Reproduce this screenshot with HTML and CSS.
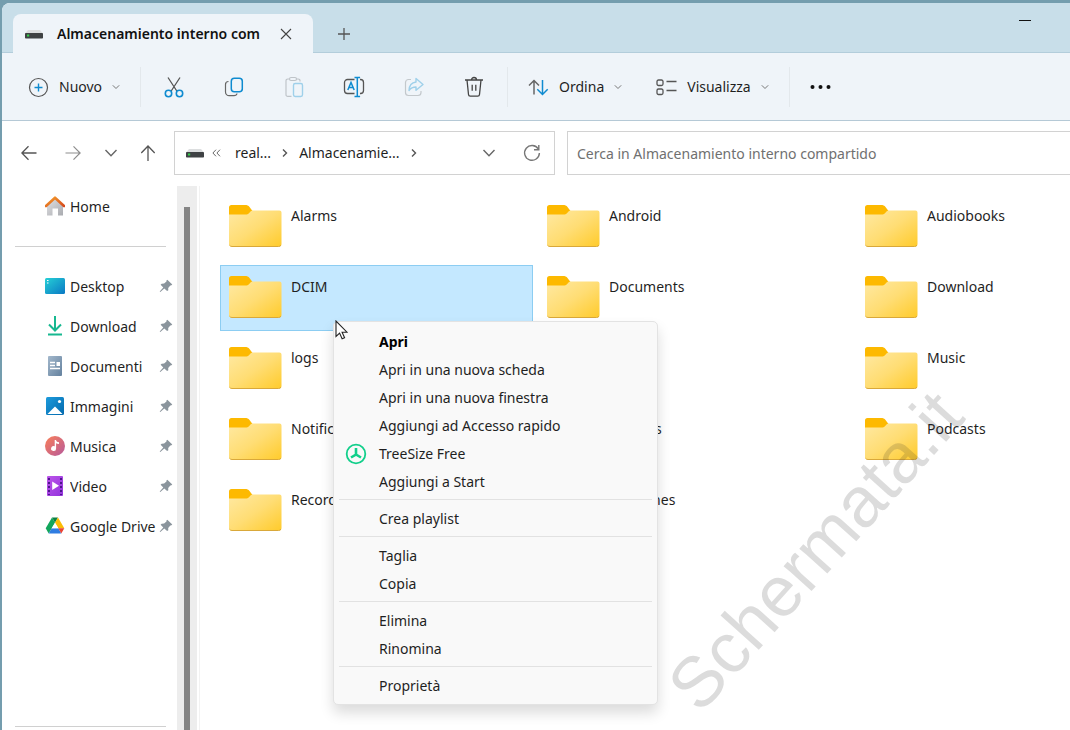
FILE: index.html
```html
<!DOCTYPE html>
<html lang="it">
<head>
  <meta charset="UTF-8" />
  <meta name="viewport" content="width=device-width, initial-scale=1.0"/>
  <title>Almacenamiento interno compartido</title>
  <link rel="stylesheet" href="styles.css">
</head>
<body>

  <!-- shared icons -->
  <svg class="sprite" width="0" height="0" aria-hidden="true">
    <defs>
      <linearGradient id="gFolder" x1="0" y1="0" x2="1" y2="1">
        <stop offset="0" stop-color="#ffe9a2"/>
        <stop offset="0.5" stop-color="#ffdd74"/>
        <stop offset="1" stop-color="#ffcb2b"/>
      </linearGradient>
      <linearGradient id="gDesk" x1="0" y1="0" x2="1" y2="1">
        <stop offset="0" stop-color="#26d0d6"/>
        <stop offset="1" stop-color="#0a78c4"/>
      </linearGradient>
      <linearGradient id="gRoof" x1="0" y1="0" x2="1" y2="1">
        <stop offset="0" stop-color="#f6a02c"/>
        <stop offset="1" stop-color="#d5491c"/>
      </linearGradient>
      <linearGradient id="gWall" x1="0" y1="0" x2="1" y2="1">
        <stop offset="0" stop-color="#e2e2e4"/>
        <stop offset="1" stop-color="#a9abb0"/>
      </linearGradient>
      <linearGradient id="gDoc" x1="0" y1="0" x2="1" y2="1">
        <stop offset="0" stop-color="#a3b8cc"/>
        <stop offset="1" stop-color="#64819e"/>
      </linearGradient>
      <linearGradient id="gPic" x1="0" y1="0" x2="1" y2="1">
        <stop offset="0" stop-color="#1d9bdc"/>
        <stop offset="1" stop-color="#0369ad"/>
      </linearGradient>
      <linearGradient id="gMusic" x1="0" y1="0" x2="1" y2="1">
        <stop offset="0" stop-color="#fa7f58"/>
        <stop offset="1" stop-color="#b65a9c"/>
      </linearGradient>
      <linearGradient id="gVideo" x1="0" y1="0" x2="1" y2="1">
        <stop offset="0" stop-color="#bd55ea"/>
        <stop offset="1" stop-color="#9233dc"/>
      </linearGradient>
    </defs>
    <symbol id="folder" viewBox="0 0 54 42">
      <path d="M1 2.5A2.5 2.5 0 0 1 3.500 0H17c2 0 3.500.6 4.500 2l3 4L19 11H1z" fill="#fdb900"/>
      <path d="M1 9.500h16.500c1.600 0 2.600-.4 3.700-1.600l1.300-1.300c.8-.8 1.500-1.100 2.700-1.100H51.500A2 2 0 0 1 53.500 7.500V39a2.500 2.500 0 0 1-2.500 2.500H3.500A2.500 2.500 0 0 1 1 39z" fill="url(#gFolder)"/>
      <path d="M1.500 40.200q.8 1.300 2.500 1.300h46.500q1.700 0 2.500-1.300" fill="none" stroke="#d9a83a" stroke-width="1"/>
    </symbol>
    <symbol id="pin" viewBox="0 0 14 14">
      <path d="M8.300.8 13.300 5.600 12 6.600 11.300 6.500 9.200 8.900 9.300 11.200 8.100 12.100 5.300 9.400 1.300 13.100.7 12.500 4.300 8.400 1.600 5.700 2.700 4.700 5.100 4.600 7.500 2.600 7.300 1.700z" fill="#8a949c"/>
    </symbol>
    <symbol id="chev" viewBox="0 0 8 8">
      <path d="M.8 2.300 4 5.500 7.200 2.300" fill="none" stroke="#777" stroke-width="1"/>
    </symbol>
    <symbol id="chevBig" viewBox="0 0 14 14">
      <path d="M1.500 4 7 9.700 12.500 4" fill="none" stroke="#666" stroke-width="1.400"/>
    </symbol>
    <symbol id="chevRight" viewBox="0 0 8 10">
      <path d="M2 1.500 5.500 5 2 8.500" fill="none" stroke="#555" stroke-width="1.400"/>
    </symbol>
    <symbol id="drive" viewBox="0 0 18 10">
      <path d="M3 1h12l3 3.500H0z" fill="#dcdedf"/>
      <rect y="4" width="18" height="5.500" rx=".8" fill="#3f4244"/>
      <rect x="2" y="5.500" width="2.200" height="2" fill="#35d04a"/>
    </symbol>
  </svg>

  <div class="window">
    <header class="titlebar">
      <div class="tab">
        <svg class="drive" viewBox="0 0 18 10"><use href="#drive"/></svg>
        <span class="tab-title">Almacenamiento interno com</span>
        <button class="tab-close" aria-label="Chiudi scheda">
          <svg width="12" height="12" viewBox="0 0 12 12"><path d="M1 1l10 10M11 1 1 11" stroke="#444" stroke-width="1.100"/></svg>
        </button>
      </div>
      <button class="tab-new" aria-label="Nuova scheda">
        <svg width="14" height="14" viewBox="0 0 14 14"><path d="M7 1v12M1 7h12" stroke="#555" stroke-width="1.300"/></svg>
      </button>
      <button class="minimize" aria-label="Riduci a icona">
        <svg width="12" height="2" viewBox="0 0 12 2"><path d="M0 .5h12" stroke="#111" stroke-width="1"/></svg>
      </button>
    </header>

    <div class="toolbar">
      <button class="tool-menu">
        <svg width="21" height="21" viewBox="0 0 21 21" fill="none"><circle cx="10.500" cy="10.500" r="9" stroke="#555" stroke-width="1.200"/><path d="M10.500 6.500v8M6.500 10.500h8" stroke="#0f8bd0" stroke-width="1.400"/></svg>
        <span>Nuovo</span>
        <svg width="8" height="8"><use href="#chev"/></svg>
      </button>
      <span class="tool-sep"></span>
      <button class="tool" aria-label="Taglia">
        <svg width="22" height="22" viewBox="0 0 22 22" fill="none" stroke-width="1.300"><path d="M5 1.500 13.800 15M17 1.500 8.200 15" stroke="#555"/><circle cx="5.500" cy="17.500" r="3.200" stroke="#0f8bd0" stroke-width="1.600"/><circle cx="16.500" cy="17.500" r="3.200" stroke="#0f8bd0" stroke-width="1.600"/></svg>
      </button>
      <button class="tool" aria-label="Copia">
        <svg width="22" height="22" viewBox="0 0 22 22" fill="none"><path d="M5.500 5.500C3.300 5.500 2.500 6.800 2.500 8.500V16a3.700 3.700 0 0 0 3.700 3.700H11c1.500 0 2.700-.7 3-2.200" stroke="#666" stroke-width="1.200"/><rect x="8.300" y="2.300" width="11" height="13.400" rx="3" stroke="#0f8bd0" stroke-width="1.500"/></svg>
      </button>
      <button class="tool" aria-label="Incolla">
        <svg width="22" height="22" viewBox="0 0 22 22" fill="none" stroke="#bfc4c9" stroke-width="1.200"><path d="M6.500 3H4.700A1.700 1.700 0 0 0 3 4.700v14A1.700 1.700 0 0 0 4.700 20.400H8.500M13.500 3h1.800A1.700 1.700 0 0 1 17 4.700V5.500"/><rect x="6.500" y="1.500" width="7" height="3" rx="1.500"/><rect x="10.500" y="7.500" width="9" height="13" rx="1.700" stroke="#9fd0ea" stroke-width="1.400"/></svg>
      </button>
      <button class="tool" aria-label="Rinomina">
        <svg width="22" height="22" viewBox="0 0 22 22" fill="none"><path d="M11.500 3.500H4.500a3 3 0 0 0-3 3v8a3 3 0 0 0 3 3h7M17 3.500h.5a3 3 0 0 1 3 3v8a3 3 0 0 1-3 3H17" stroke="#555" stroke-width="1.300"/><path d="M4.800 14 8 6.500 11.200 14M5.900 11.500h4.200M14.300 2v18M11.500 1.500h5.600M11.500 20.500h5.600" stroke="#0f8bd0" stroke-width="1.500"/></svg>
      </button>
      <button class="tool" aria-label="Condividi">
        <svg width="22" height="22" viewBox="0 0 22 22" fill="none"><path d="M8 3.500H5.500a3 3 0 0 0-3 3v10a3 3 0 0 0 3 3h9.500a3 3 0 0 0 3-3V15" stroke="#c3c8cc" stroke-width="1.200"/><path d="M13 2.500 20 8.500 13 14.300V11c-3.500 0-5.500 1.300-7 3.500.2-4.800 2.500-8 7-8.500z" stroke="#9fd0ea" stroke-width="1.400" stroke-linejoin="round"/></svg>
      </button>
      <button class="tool" aria-label="Elimina">
        <svg width="22" height="22" viewBox="0 0 22 22" fill="none" stroke="#444" stroke-width="1.300"><path d="M2 4h18M8.500 4a2.500 2.500 0 0 1 5 0M4 4l1.500 14.500a1.800 1.800 0 0 0 1.800 1.700h7.400a1.800 1.800 0 0 0 1.800-1.700L18 4M9.200 8.800v6M12.800 8.800v6"/></svg>
      </button>
      <span class="tool-sep"></span>
      <button class="tool-menu">
        <svg width="21" height="21" viewBox="0 0 21 21" fill="none" stroke-width="1.500"><path d="M6 17.500V3.500M1 8.500l5-5 5 5" stroke="#666"/><path d="M14.500 3v14.500M9.300 12.300l5.200 5.200 5.200-5.200" stroke="#0f8bd0"/></svg>
        <span>Ordina</span>
        <svg width="8" height="8"><use href="#chev"/></svg>
      </button>
      <button class="tool-menu">
        <svg width="21" height="21" viewBox="0 0 21 21" fill="none" stroke="#555" stroke-width="1.300"><rect x="1" y="3" width="6" height="5.500" rx="1.500"/><rect x="1" y="12" width="6" height="5.500" rx="1.500"/><path d="M10.500 4.500h10M10.500 13.500h10"/></svg>
        <span>Visualizza</span>
        <svg width="8" height="8"><use href="#chev"/></svg>
      </button>
      <span class="tool-sep"></span>
      <button class="tool-menu" aria-label="Altro">
        <svg width="22" height="6" viewBox="0 0 22 6" fill="#111"><circle cx="2.500" cy="3" r="2"/><circle cx="10.500" cy="3" r="2"/><circle cx="18.500" cy="3" r="2"/></svg>
      </button>
    </div>

    <div class="navbar">
      <button class="nav-btn" aria-label="Indietro">
        <svg width="16" height="16" viewBox="0 0 16 16" fill="none" stroke="#555" stroke-width="1.300"><path d="M15.500 8H1M7.500 1.300.9 8l6.600 6.700"/></svg>
      </button>
      <button class="nav-btn" aria-label="Avanti">
        <svg width="16" height="16" viewBox="0 0 16 16" fill="none" stroke="#8d8d8d" stroke-width="1.200"><path d="M.5 8H15M8.500 1.300 15.100 8l-6.600 6.700"/></svg>
      </button>
      <button class="nav-btn narrow" aria-label="Percorsi recenti">
        <svg width="14" height="14"><use href="#chevBig"/></svg>
      </button>
      <button class="nav-btn" aria-label="Su">
        <svg width="16" height="16" viewBox="0 0 16 16" fill="none" stroke="#555" stroke-width="1.300"><path d="M7 16V1M.3 8 7 1l6.700 7"/></svg>
      </button>
      <div class="address">
        <svg class="drive" viewBox="0 0 18 10"><use href="#drive"/></svg>
        <svg class="more" width="9" height="8" viewBox="0 0 9 8"><path d="M4 .7.900 4 4 7.300M8 .7 4.900 4 8 7.300" fill="none" stroke="#666"/></svg>
        <a href="#">real...</a>
        <svg width="8" height="10"><use href="#chevRight"/></svg>
        <a href="#">Almacenamie...</a>
        <svg width="8" height="10"><use href="#chevRight"/></svg>
        <button class="history" aria-label="Percorsi precedenti"><svg width="14" height="14"><use href="#chevBig"/></svg></button>
        <button class="refresh" aria-label="Aggiorna">
          <svg width="18" height="18" viewBox="0 0 18 18" fill="none" stroke="#777" stroke-width="1.400"><path d="M15.300 5A7.400 7.400 0 1 0 16.400 9M15.800 1v4.800H11"/></svg>
        </button>
      </div>
      <input class="search" type="search" aria-label="Cerca" placeholder="Cerca in Almacenamiento interno compartido">
    </div>

    <div class="content">
      <nav class="sidebar">
        <a href="#" class="side-item">
          <svg width="20" height="20" viewBox="0 0 20 20"><path d="M2 9 10 2l8 7v10.500h-5V12.500H7.500v7H2z" fill="url(#gWall)"/><path d="M1 10 10 1.700l9 8.300" fill="none" stroke="url(#gRoof)" stroke-width="2.600" stroke-linejoin="round" stroke-linecap="round"/></svg>
          <span>Home</span>
        </a>
        <hr>
        <a href="#" class="side-item">
          <svg width="20" height="20" viewBox="0 0 20 20"><rect y="2" width="20" height="16" rx="1.500" fill="url(#gDesk)"/><path d="M2 4.500h1.500M2 7h1.500" stroke="#fff" stroke-width="1.200"/></svg>
          <span>Desktop</span>
          <svg class="pin"><use href="#pin"/></svg>
        </a>
        <a href="#" class="side-item">
          <svg width="20" height="20" viewBox="0 0 20 20" fill="none" stroke="#17b890" stroke-width="2"><path d="M10 0v14M4 8.500l6 6 6-6M3 18.500h14"/></svg>
          <span>Download</span>
          <svg class="pin"><use href="#pin"/></svg>
        </a>
        <a href="#" class="side-item">
          <svg width="20" height="20" viewBox="0 0 20 20"><rect x="3" width="14" height="20" rx="1" fill="url(#gDoc)"/><path d="M5 6.500h5M5 9.500h5M5 12.500h10" stroke="#fff" stroke-width="1.300"/><rect x="11.500" y="6" width="3.500" height="4" fill="#fff"/></svg>
          <span>Documenti</span>
          <svg class="pin"><use href="#pin"/></svg>
        </a>
        <a href="#" class="side-item">
          <svg width="20" height="20" viewBox="0 0 20 20"><rect x="1" y="1" width="18" height="18" rx="1.500" fill="url(#gPic)"/><path d="M2.500 18 10 10.500 17.500 18z" fill="#fff"/><circle cx="14.500" cy="5.500" r="1.600" fill="#fff"/></svg>
          <span>Immagini</span>
          <svg class="pin"><use href="#pin"/></svg>
        </a>
        <a href="#" class="side-item">
          <svg width="20" height="20" viewBox="0 0 20 20"><circle cx="10" cy="10" r="10" fill="url(#gMusic)"/><path d="M9.700 4h1.300c.3 1.700 1.500 2 3 2.200v1.800c-1.200 0-2.200-.3-2.900-.8V12.500a2.500 2.500 0 1 1-1.400-2.200z" fill="#fff"/></svg>
          <span>Musica</span>
          <svg class="pin"><use href="#pin"/></svg>
        </a>
        <a href="#" class="side-item">
          <svg width="20" height="20" viewBox="0 0 20 20"><rect x="2" width="16" height="20" rx="1" fill="url(#gVideo)"/><path d="M4 2v17M16 2v17" stroke="#4e168c" stroke-width="2" stroke-dasharray="2 2"/><path d="M7.200 5.500v8.500l6.800-4.200z" fill="#fff"/></svg>
          <span>Video</span>
          <svg class="pin"><use href="#pin"/></svg>
        </a>
        <a href="#" class="side-item">
          <svg width="20" height="20" viewBox="0 0 20 20"><path d="M7 1.500 10 6.800 3.700 17.500.7 12.300z" fill="#12a65c"/><path d="M7 1.500h6l-3 5.300z" fill="#0c8043"/><path d="M13 1.500l6.300 10.800h-6L10 6.800z" fill="#fbbc05"/><path d="M6.700 12.300h6.600L16.300 17.500H3.700z" fill="#2f7de1"/><path d="M13.300 12.300h6L16.300 17.500z" fill="#ea4335"/><path d="M10 6.800l3.300 5.500H6.700z" fill="#fff"/></svg>
          <span>Google Drive</span>
          <svg class="pin"><use href="#pin"/></svg>
        </a>
        <hr class="last">
      </nav>
      <div class="scrollbar"><div class="thumb"></div></div>

      <main class="files">
        <a href="#" class="file"><svg class="folder"><use href="#folder"/></svg><span>Alarms</span></a>
        <a href="#" class="file"><svg class="folder"><use href="#folder"/></svg><span>Android</span></a>
        <a href="#" class="file"><svg class="folder"><use href="#folder"/></svg><span>Audiobooks</span></a>
        <a href="#" class="file selected"><svg class="folder"><use href="#folder"/></svg><span>DCIM</span></a>
        <a href="#" class="file"><svg class="folder"><use href="#folder"/></svg><span>Documents</span></a>
        <a href="#" class="file"><svg class="folder"><use href="#folder"/></svg><span>Download</span></a>
        <a href="#" class="file"><svg class="folder"><use href="#folder"/></svg><span>logs</span></a>
        <a href="#" class="file"><svg class="folder"><use href="#folder"/></svg><span>Movies</span></a>
        <a href="#" class="file"><svg class="folder"><use href="#folder"/></svg><span>Music</span></a>
        <a href="#" class="file"><svg class="folder"><use href="#folder"/></svg><span>Notifications</span></a>
        <a href="#" class="file"><svg class="folder"><use href="#folder"/></svg><span>Pictures</span></a>
        <a href="#" class="file"><svg class="folder"><use href="#folder"/></svg><span>Podcasts</span></a>
        <a href="#" class="file"><svg class="folder"><use href="#folder"/></svg><span>Recordings</span></a>
        <a href="#" class="file"><svg class="folder"><use href="#folder"/></svg><span>Ringtones</span></a>
      </main>

      <div class="watermark">Schermata.it</div>

      <div class="context-menu">
        <button class="default">Apri</button>
        <button>Apri in una nuova scheda</button>
        <button>Apri in una nuova finestra</button>
        <button>Aggiungi ad Accesso rapido</button>
        <button class="with-icon">
          <svg width="22" height="22" viewBox="0 0 22 22" fill="none" stroke="#12cf8b"><circle cx="11" cy="11" r="9.300" stroke-width="1.800"/><path d="M11 5v6.500L6 14.500M11 11.500l5 3" stroke-width="2.600"/></svg>
          <span>TreeSize Free</span>
        </button>
        <button>Aggiungi a Start</button>
        <hr>
        <button>Crea playlist</button>
        <hr>
        <button>Taglia</button>
        <button>Copia</button>
        <hr>
        <button>Elimina</button>
        <button>Rinomina</button>
        <hr>
        <button>Proprietà</button>
      </div>

      <svg class="cursor" width="13" height="20" viewBox="0 0 13 20"><path d="M1 1v15.500l3.600-3.400 2.500 5.700 2.500-1.100-2.500-5.500h4.900z" fill="#fff" stroke="#222" stroke-width="1.100"/></svg>
    </div>
  </div>

</body>
</html>
```
FILE: styles.css
```css
* {
  box-sizing: border-box;
}
body {
  margin: 0;
  height: 100vh;
  padding: 3px 0 0 2px;
  overflow: hidden;
  background: #749dae;
  font-family: "Noto Sans", "Open Sans", sans-serif;
  font-size: 14px;
  line-height: 20px;
  color: #1f1f1f;
}
button {
  font: inherit;
  color: inherit;
  background: none;
  border: none;
  padding: 0;
}
a {
  color: inherit;
  text-decoration: none;
}
svg {
  flex: none;
}
hr {
  height: 1px;
  border: none;
  margin: 0;
}
.sprite {
  position: absolute;
}
.window {
  height: 100%;
  display: flex;
  flex-direction: column;
  background: #fff;
  border-radius: 8px 0 0 0;
  overflow: hidden;
}
.drive {
  width: 18px;
  height: 10px;
}

/* title bar */
.titlebar {
  height: 50px;
  flex: none;
  display: flex;
  align-items: flex-end;
  padding-left: 11px;
  background: #c8dee9;
  border-bottom: 1px solid #b3cddb;
}
.tab {
  width: 300px;
  height: 39px;
  display: flex;
  align-items: center;
  padding: 0 21px 0 12px;
  margin-bottom: -1px;
  background: #eff4f9;
  border-radius: 8px 8px 0 0;
}
.tab-title {
  flex: 1;
  padding-left: 14px;
  font-weight: 600;
  white-space: nowrap;
  color: #111;
}
.tab-close,
.tab-new {
  display: flex;
}
.tab-new {
  padding: 11px 24px;
}
.minimize {
  align-self: flex-start;
  display: flex;
  margin-left: auto;
  padding: 17px 39px;
}

/* command bar */
.toolbar {
  height: 68px;
  flex: none;
  display: flex;
  align-items: center;
  padding: 1px 0 0 9px;
  background: #eff4f9;
  border-bottom: 1px solid #b5c9d6;
}
.tool-menu {
  height: 40px;
  display: flex;
  align-items: center;
  gap: 10px;
  padding: 0 17px;
}
.tool {
  width: 60px;
  height: 40px;
  display: flex;
  align-items: center;
  justify-content: center;
}
.tool-sep {
  width: 1px;
  height: 40px;
  margin: 0 3px;
  background: #e3e8ec;
}

/* navigation */
.navbar {
  flex: none;
  display: flex;
  align-items: center;
  padding: 10px 0 11px 5px;
}
.nav-btn {
  width: 44px;
  height: 44px;
  display: flex;
  align-items: center;
  justify-content: center;
}
.nav-btn.narrow {
  width: 32px;
}
.address {
  width: 381px;
  height: 44px;
  display: flex;
  align-items: center;
  gap: 10px;
  padding: 0 13px 0 11px;
  margin-left: 3px;
  margin-right: 12px;
  border: 1px solid #d2d2d2;
}
.address .more {
  margin: 0 4px 0 -2px;
}
.history,
.refresh {
  display: flex;
}
.history {
  margin-left: auto;
}
.refresh {
  margin-left: 17px;
}
.search {
  flex: 1;
  height: 44px;
  padding: 0 9px;
  font: inherit;
  background: #fff;
  border: 1px solid #d2d2d2;
  border-right: none;
  border-radius: 0;
}
.search::placeholder {
  color: #707070;
}

/* content */
.content {
  position: relative;
  flex: 1;
  min-height: 0;
  display: flex;
}
.sidebar {
  width: 175px;
  flex: none;
  display: flex;
  flex-direction: column;
  padding-bottom: 3px;
}
.sidebar hr {
  margin: 20px 11px 19px 13px;
  background: #d0d0d0;
}
.sidebar hr.last {
  margin-top: auto;
  margin-bottom: 0;
}
.side-item {
  height: 40px;
  display: flex;
  align-items: center;
  gap: 5px;
  padding: 0 4px 0 43px;
}
.side-item span {
  flex: 1;
  min-width: 0;
  padding-top: 2px;
  overflow: hidden;
  white-space: nowrap;
}
.side-item .pin {
  width: 14px;
  height: 14px;
  margin-left: -4px;
}
.scrollbar {
  width: 20px;
  flex: none;
  padding: 21px 7px 0;
  background: #ededed;
}
.thumb {
  height: 100%;
  background: #858585;
}
.files {
  flex: 1;
  display: grid;
  grid-template-columns: repeat(3, 313px);
  grid-auto-rows: 66px;
  align-content: start;
  gap: 5px;
  margin-left: 2px;
  padding: 8px 0 0 20px;
  border-left: 1px solid #f2f2f2;
}
.file {
  display: flex;
  gap: 9px;
  padding: 10px 7px;
  border: 1px solid transparent;
}
.file span {
  padding-top: 1px;
}
.file.selected {
  background: #c4e8ff;
  border-color: #8ccdf2;
}
.folder {
  width: 54px;
  height: 42px;
}

.watermark {
  position: absolute;
  left: 698px;
  top: 470px;
  font-family: "Liberation Sans", sans-serif;
  font-size: 71px;
  line-height: 70px;
  color: rgba(40, 40, 40, 0.16);
  transform: rotate(-48deg);
  transform-origin: 0 59px;
  pointer-events: none;
}

/* context menu */
.context-menu {
  position: absolute;
  left: 331px;
  top: 135px;
  width: 325px;
  display: flex;
  flex-direction: column;
  padding: 6px 5px 4px;
  background: #f9f9f9;
  border: 1px solid #e3e3e3;
  border-radius: 5px;
  box-shadow: 0 8px 14px rgba(0, 0, 0, 0.14);
}
.context-menu button {
  height: 28px;
  padding-left: 40px;
  text-align: left;
}
.context-menu .default {
  font-weight: 700;
  color: #000;
}
.context-menu .with-icon {
  display: flex;
  align-items: center;
  gap: 12px;
  padding-left: 6px;
}
.context-menu hr {
  margin: 3px 0 5px;
  background: #e2e2e2;
}
.cursor {
  position: absolute;
  left: 333px;
  top: 134px;
}
```
